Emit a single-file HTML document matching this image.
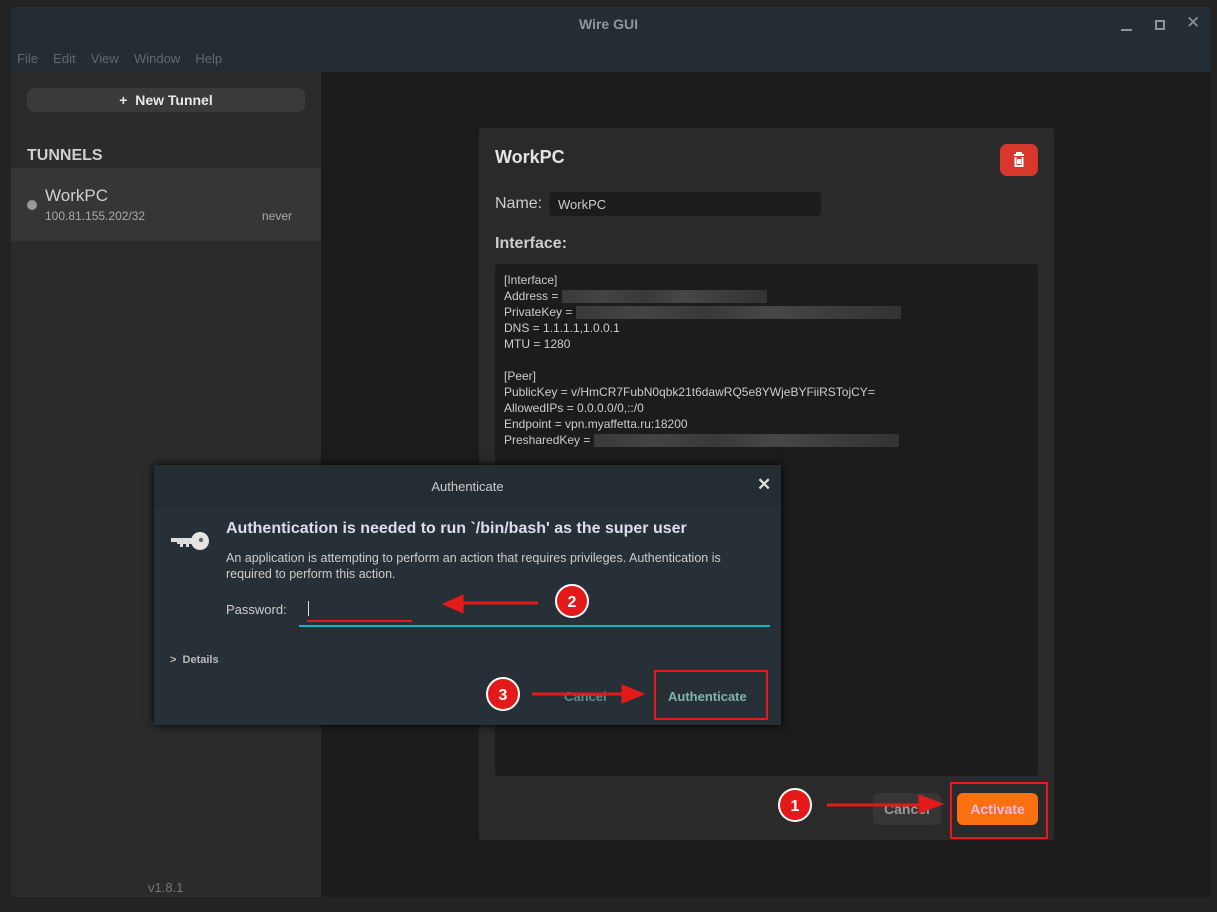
<!DOCTYPE html>
<html><head><meta charset="utf-8"><style>
*{margin:0;padding:0;box-sizing:border-box}
body{width:1217px;height:912px;background:#232323;font-family:"Liberation Sans",sans-serif;position:relative;overflow:hidden;color:#ddd}
.a{position:absolute}
.blur{display:inline-block;vertical-align:middle;height:13px;background:linear-gradient(90deg,#3a3a3a,#444 20%,#393939 40%,#474747 60%,#3c3c3c 80%,#333)}
</style></head><body>
<div class="a" style="left:11px;top:7px;width:1199px;height:65px;background:#232d33"></div>
<div class="a" style="left:0;top:16px;width:1217px;text-align:center;font-size:14px;color:#8c969b;font-weight:bold">Wire GUI</div>
<div class="a" style="left:1121px;top:29px;width:11px;height:2px;background:#8a9499"></div>
<div class="a" style="left:1155px;top:20px;width:10px;height:10px;border:2px solid #8a9499"></div>
<div class="a" style="left:1186px;top:13px;font-size:17px;color:#8a9499">✕</div>
<div class="a" style="left:17px;top:51px;font-size:13px;color:#5f6a70;word-spacing:4px">File&nbsp; Edit&nbsp; View&nbsp; Window&nbsp; Help</div>
<div class="a" style="left:11px;top:72px;width:310px;height:825px;background:#2b2b2b"></div>
<div class="a" style="left:321px;top:72px;width:889px;height:825px;background:#1c1c1c"></div>
<div class="a" style="left:27px;top:88px;width:278px;height:24px;background:#3a3a3a;border-radius:7px;text-align:center;line-height:24px;font-size:14px;font-weight:bold;color:#e8e8e8">+&nbsp; New Tunnel</div>
<div class="a" style="left:27px;top:147px;font-size:16px;font-weight:bold;color:#cfcfcf">TUNNELS</div>
<div class="a" style="left:11px;top:168px;width:310px;height:73px;background:#363636"></div>
<div class="a" style="left:27px;top:200px;width:10px;height:10px;border-radius:50%;background:#999"></div>
<div class="a" style="left:45px;top:186px;font-size:17px;color:#d0d0d0">WorkPC</div>
<div class="a" style="left:45px;top:209px;font-size:12px;color:#aaa">100.81.155.202/32</div>
<div class="a" style="left:262px;top:209px;font-size:12px;color:#aaa">never</div>
<div class="a" style="left:148px;top:880px;font-size:13px;color:#777">v1.8.1</div>

<div class="a" style="left:479px;top:128px;width:575px;height:712px;background:#2a2a2a;border-radius:3px"></div>
<div class="a" style="left:495px;top:147px;font-size:18px;font-weight:bold;color:#e4e4e4">WorkPC</div>
<div class="a" style="left:1000px;top:144px;width:38px;height:32px;background:#d8372c;border-radius:7px"><svg width="38" height="32"><g fill="none" stroke="#fff" stroke-width="2"><path d="M14 11h10M17 11v-2h4v2M15.5 13v9h7v-9M18 15v5M20 15v5"/></g></svg></div>
<div class="a" style="left:495px;top:195px;font-size:16px;color:#ccc">Name:</div>
<div class="a" style="left:549px;top:192px;width:272px;height:24px;background:#1c1c1c;border-radius:4px;font-size:13px;color:#ccc;padding:5px 9px">WorkPC</div>
<div class="a" style="left:495px;top:235px;font-size:16px;font-weight:bold;color:#ccc">Interface:</div>
<div class="a" style="left:495px;top:264px;width:543px;height:512px;background:#1c1c1c;border-radius:3px"></div>
<div class="a" style="left:504px;top:272px;font-size:12px;line-height:16px;color:#ccc;white-space:pre">[Interface]
Address = <span class="blur" style="width:205px"></span>
PrivateKey = <span class="blur" style="width:325px"></span>
DNS = 1.1.1.1,1.0.0.1
MTU = 1280

[Peer]
PublicKey = v/HmCR7FubN0qbk21t6dawRQ5e8YWjeBYFiiRSTojCY=
AllowedIPs = 0.0.0.0/0,::/0
Endpoint = vpn.myaffetta.ru:18200
PresharedKey = <span class="blur" style="width:305px"></span></div>
<div class="a" style="left:873px;top:793px;width:68px;height:32px;background:#363636;border-radius:6px;text-align:center;line-height:32px;font-size:14px;font-weight:bold;color:#999">Cancel</div>
<div class="a" style="left:957px;top:793px;width:81px;height:32px;background:#f8700f;border-radius:6px;text-align:center;line-height:32px;font-size:14px;font-weight:bold;color:#fbe">Activate</div>
<div class="a" style="left:950px;top:782px;width:98px;height:57px;border:2px solid #e41a1a"></div>

<div class="a" style="left:154px;top:465px;width:627px;height:260px;background:#263036;box-shadow:0 0 8px #000"></div>
<div class="a" style="left:154px;top:465px;width:627px;height:42px;background:#242d32"></div>
<div class="a" style="left:154px;top:479px;width:627px;text-align:center;font-size:13px;color:#ccc">Authenticate</div>
<div class="a" style="left:757px;top:475px;font-size:17px;color:#ddd;font-weight:bold">✕</div>
<svg class="a" style="left:168px;top:530px" width="44" height="28"><path d="M3 8h22v6h-4v3h-3v-3h-3v3h-3v-3h-3v-2H3z" fill="#ddd"/><circle cx="32" cy="11" r="9" fill="#e4e4e4"/><circle cx="33" cy="10" r="2.2" fill="#666"/></svg>
<div class="a" style="left:226px;top:520px;font-size:16px;font-weight:bold;color:#dde">Authentication is needed to run `/bin/bash' as the super user</div>
<div class="a" style="left:226px;top:550px;width:530px;font-size:12.5px;line-height:16px;color:#ccc">An application is attempting to perform an action that requires privileges. Authentication is required to perform this action.</div>
<div class="a" style="left:226px;top:602px;font-size:13px;color:#ccc">Password:</div>
<div class="a" style="left:308px;top:601px;width:1px;height:15px;background:#ddd"></div>
<div class="a" style="left:299px;top:625px;width:471px;height:2px;background:#1ab0c8"></div>
<div class="a" style="left:307px;top:620px;width:105px;height:2px;background:#e41a1a"></div>
<div class="a" style="left:170px;top:654px;font-size:11px;font-weight:bold;color:#bbb">&gt;&nbsp; Details</div>
<div class="a" style="left:564px;top:689px;font-size:13px;font-weight:bold;color:#5d8d8a">Cancel</div>
<div class="a" style="left:668px;top:689px;font-size:13px;font-weight:bold;color:#7fb3ae">Authenticate</div>
<div class="a" style="left:654px;top:670px;width:114px;height:50px;border:2px solid #e41a1a"></div>

<svg class="a" style="left:0;top:0" width="1217" height="912">
<g fill="#e41a1a" stroke="#e41a1a">
<path d="M538 603H460" stroke-width="3"/><path d="M443 604l20-9v18z"/>
<path d="M532 694h92" stroke-width="3"/><path d="M644 694l-22-9v18z"/>
<path d="M827 805h95" stroke-width="3"/><path d="M943 804l-24-9v18z"/>
</g>
<g font-family="Liberation Sans" font-weight="bold" font-size="16" fill="#fff" text-anchor="middle">
<circle cx="572" cy="601" r="16" fill="#e41a1a" stroke="#fff" stroke-width="2"/><text x="572" y="607">2</text>
<circle cx="503" cy="694" r="16" fill="#e41a1a" stroke="#fff" stroke-width="2"/><text x="503" y="700">3</text>
<circle cx="795" cy="805" r="16" fill="#e41a1a" stroke="#fff" stroke-width="2"/><text x="795" y="811">1</text>
</g></svg>
</body></html>
